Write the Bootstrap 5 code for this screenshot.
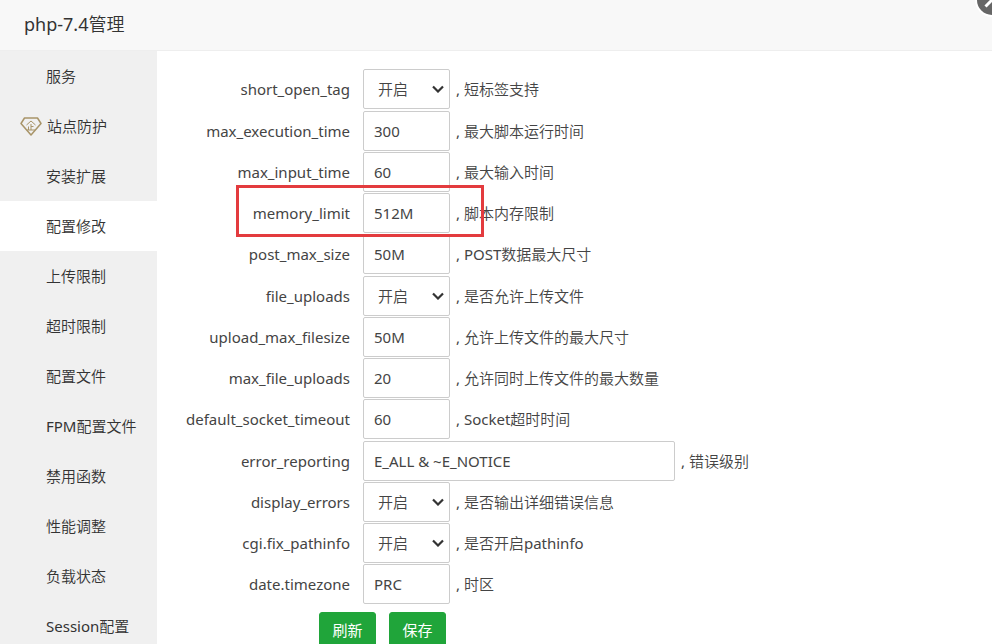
<!DOCTYPE html>
<html lang="zh-CN">
<head>
<meta charset="utf-8">
<meta name="viewport" content="width=device-width, initial-scale=1">
<title>php-7.4管理</title>
<link href="https://cdn.jsdelivr.net/npm/bootstrap@5.3.0/dist/css/bootstrap.min.css" rel="stylesheet">
<style>
  body { font-family: "Noto Sans", "Noto Sans CJK SC DemiLight", "Noto Sans CJK SC", sans-serif; font-size: 15px; line-height: 20px; color: #444; }
  .app-header { background: #f8f8f8; border-bottom: 1px solid #eee; padding: 0 24px 2px; }
  .app-title { font-size: 18px; line-height: 48px; color: #333; }
  .btn-dismiss { top: -17px; right: -17px; width: 34px; height: 34px; }
  .side-menu { width: 157px; background: #f0f0f0; }
  .side-menu .nav-link { height: 50px; padding: 0 0 0 46px; color: #333; }
  .side-menu .nav-link.active { background: #fff; }
  .side-menu .has-icon { padding-left: 20px; gap: 5px; }
  .config-form { padding: 18px 20px 0 0; }
  .config-row { padding-bottom: 1px; }
  .config-row:nth-child(4n+1) { padding-bottom: 2px; }
  .config-label { width: 193px; margin-right: 13px; text-align: right; }
  .config-input, .config-select { width: 87px; height: 40px; border: 1px solid #ccc; border-radius: 2px; padding: 0 10px; color: #444; background-color: #fff; font-family: inherit; font-size: 15px; }
  .config-select { appearance: none; padding: 0 14px; background: #fff url("data:image/svg+xml,%3Csvg xmlns='http://www.w3.org/2000/svg' viewBox='0 0 12 8'%3E%3Cpath d='M1 1.500l5 5 5-5' fill='none' stroke='%23333' stroke-width='2.200'/%3E%3C/svg%3E") no-repeat right 5px center / 12px 8px; }
  .config-input.wide { width: 312px; }
  .config-note { margin-left: 6px; }
  .highlight-frame { left: 79px; top: -8px; width: 248px; height: 52px; border: 3px solid #e33b3e; pointer-events: none; }
  .form-actions { gap: 13px; padding: 6px 0 20px 162px; }
  .btn-save { --bs-btn-bg: #20a53a; --bs-btn-color: #fff; --bs-btn-border-color: #20a53a; --bs-btn-hover-bg: #10952a; --bs-btn-hover-color: #fff; --bs-btn-font-size: 15px; --bs-btn-border-radius: 3px; width: 57px; height: 36px; padding: 0; font-family: "Noto Sans CJK SC", sans-serif; line-height: 20px; }
</style>
</head>
<body>
<div class="d-flex flex-column vh-100 overflow-hidden">
  <header class="app-header position-relative">
    <h1 class="app-title fw-normal m-0">php-7.4管理</h1>
    <button type="button" class="btn-dismiss position-absolute border-0 p-0 bg-transparent" aria-label="关闭">
      <svg class="d-block" width="34" height="34" viewBox="0 0 34 34"><circle cx="17" cy="17" r="17" fill="#fff"/><circle cx="17" cy="17" r="15" fill="#666"/><path d="M10.500 10.500l13 13M23.500 10.500l-13 13" stroke="#fff" stroke-width="3"/></svg>
    </button>
  </header>
  <div class="d-flex flex-grow-1">
    <nav class="side-menu nav flex-column flex-nowrap flex-shrink-0">
      <a class="nav-link d-flex align-items-center" href="#">服务</a>
      <a class="nav-link d-flex align-items-center has-icon" href="#">
        <svg width="22" height="20" viewBox="0 0 22 20" fill="none" stroke="#a89468" aria-hidden="true"><path d="M4.500 2h13L21 7.500 11 19 1 7.500z" stroke-width="1.500" stroke-linejoin="round"/><path d="M6.500 9L11 5l4.500 4M11 8v6M11 10.500h2.500M8.500 10.500V14M7 14h8" stroke-width="1"/></svg>
        站点防护</a>
      <a class="nav-link d-flex align-items-center" href="#">安装扩展</a>
      <a class="nav-link d-flex align-items-center active" href="#" aria-current="page">配置修改</a>
      <a class="nav-link d-flex align-items-center" href="#">上传限制</a>
      <a class="nav-link d-flex align-items-center" href="#">超时限制</a>
      <a class="nav-link d-flex align-items-center" href="#">配置文件</a>
      <a class="nav-link d-flex align-items-center" href="#">FPM配置文件</a>
      <a class="nav-link d-flex align-items-center" href="#">禁用函数</a>
      <a class="nav-link d-flex align-items-center" href="#">性能调整</a>
      <a class="nav-link d-flex align-items-center" href="#">负载状态</a>
      <a class="nav-link d-flex align-items-center" href="#">Session配置</a>
    </nav>
    <form class="config-form flex-grow-1">
      <div class="config-row d-flex align-items-center"><label class="config-label" for="short_open_tag">short_open_tag</label><select class="config-select" id="short_open_tag"><option>开启</option><option>关闭</option></select><span class="config-note">, 短标签支持</span></div>
      <div class="config-row d-flex align-items-center"><label class="config-label" for="max_execution_time">max_execution_time</label><input class="config-input" id="max_execution_time" type="text" value="300"><span class="config-note">, 最大脚本运行时间</span></div>
      <div class="config-row d-flex align-items-center"><label class="config-label" for="max_input_time">max_input_time</label><input class="config-input" id="max_input_time" type="text" value="60"><span class="config-note">, 最大输入时间</span></div>
      <div class="config-row d-flex align-items-center position-relative"><label class="config-label" for="memory_limit">memory_limit</label><input class="config-input" id="memory_limit" type="text" value="512M"><span class="config-note">, 脚本内存限制</span><div class="highlight-frame position-absolute"></div></div>
      <div class="config-row d-flex align-items-center"><label class="config-label" for="post_max_size">post_max_size</label><input class="config-input" id="post_max_size" type="text" value="50M"><span class="config-note">, POST数据最大尺寸</span></div>
      <div class="config-row d-flex align-items-center"><label class="config-label" for="file_uploads">file_uploads</label><select class="config-select" id="file_uploads"><option>开启</option><option>关闭</option></select><span class="config-note">, 是否允许上传文件</span></div>
      <div class="config-row d-flex align-items-center"><label class="config-label" for="upload_max_filesize">upload_max_filesize</label><input class="config-input" id="upload_max_filesize" type="text" value="50M"><span class="config-note">, 允许上传文件的最大尺寸</span></div>
      <div class="config-row d-flex align-items-center"><label class="config-label" for="max_file_uploads">max_file_uploads</label><input class="config-input" id="max_file_uploads" type="text" value="20"><span class="config-note">, 允许同时上传文件的最大数量</span></div>
      <div class="config-row d-flex align-items-center"><label class="config-label" for="default_socket_timeout">default_socket_timeout</label><input class="config-input" id="default_socket_timeout" type="text" value="60"><span class="config-note">, Socket超时时间</span></div>
      <div class="config-row d-flex align-items-center"><label class="config-label" for="error_reporting">error_reporting</label><input class="config-input wide" id="error_reporting" type="text" value="E_ALL &amp; ~E_NOTICE"><span class="config-note">, 错误级别</span></div>
      <div class="config-row d-flex align-items-center"><label class="config-label" for="display_errors">display_errors</label><select class="config-select" id="display_errors"><option>开启</option><option>关闭</option></select><span class="config-note">, 是否输出详细错误信息</span></div>
      <div class="config-row d-flex align-items-center"><label class="config-label" for="fix_pathinfo">cgi.fix_pathinfo</label><select class="config-select" id="fix_pathinfo"><option>开启</option><option>关闭</option></select><span class="config-note">, 是否开启pathinfo</span></div>
      <div class="config-row d-flex align-items-center"><label class="config-label" for="timezone">date.timezone</label><input class="config-input" id="timezone" type="text" value="PRC"><span class="config-note">, 时区</span></div>
      <div class="form-actions d-flex">
        <button type="button" class="btn btn-save">刷新</button>
        <button type="submit" class="btn btn-save">保存</button>
      </div>
    </form>
  </div>
</div>
<script src="https://cdn.jsdelivr.net/npm/bootstrap@5.3.0/dist/js/bootstrap.bundle.min.js"></script>
</body>
</html>
